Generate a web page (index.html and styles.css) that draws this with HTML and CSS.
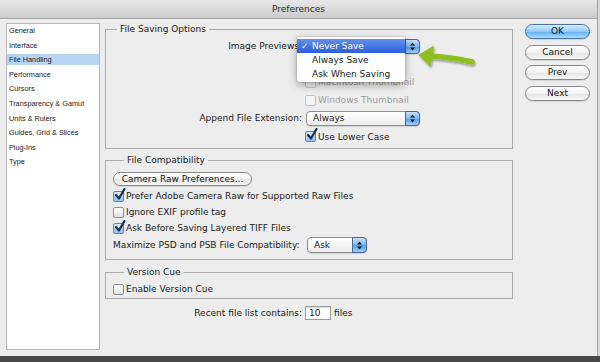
FILE: index.html
```html
<!DOCTYPE html>
<html lang="en">
<head>
    <meta charset="UTF-8">
    <title>Preferences</title>
    <link rel="stylesheet" href="styles.css">
</head>
<body>
    <div class="desk">
        <div class="window">
            <div class="titlebar">Preferences</div>
            <div class="content">
                <ul class="sidebar">
                    <li>General</li>
                    <li>Interface</li>
                    <li class="active">File Handling</li>
                    <li>Performance</li>
                    <li>Cursors</li>
                    <li>Transparency &amp; Gamut</li>
                    <li>Units &amp; Rulers</li>
                    <li>Guides, Grid &amp; Slices</li>
                    <li>Plug-Ins</li>
                    <li>Type</li>
                </ul>

                <div class="main">
                    <fieldset class="group saving">
                        <legend>File Saving Options</legend>
                        <div class="row">
                            <span class="label">Image Previews:</span>
                            <div class="select">Never Save<span class="stepper"><svg width="5" height="9" viewBox="0 0 5 9"><path d="M0 3.5 L2.5 0.5 L5 3.5 Z M0 5.5 L2.5 8.5 L5 5.5 Z" fill="#111"/></svg></span></div>
                        </div>
                        <!-- row hidden under the open menu -->
                        <div class="row indent">
                            <span class="check off"><span class="box"></span></span>
                        </div>
                        <div class="row indent">
                            <span class="check off"><span class="box"></span>Macintosh Thumbnail</span>
                        </div>
                        <div class="row indent">
                            <span class="check off"><span class="box"></span>Windows Thumbnail</span>
                        </div>
                        <div class="row">
                            <span class="label">Append File Extension:</span>
                            <div class="select">Always<span class="stepper"><svg width="5" height="9" viewBox="0 0 5 9"><path d="M0 3.5 L2.5 0.5 L5 3.5 Z M0 5.5 L2.5 8.5 L5 5.5 Z" fill="#111"/></svg></span></div>
                        </div>
                        <div class="row indent last">
                            <span class="check"><span class="box on"><svg width="12" height="13" viewBox="0 0 12 13"><path d="M2 7 L5 10.5 L10.5 1" fill="none" stroke="#1d2f4a" stroke-width="2.2" stroke-linecap="round" stroke-linejoin="round"/></svg></span>Use Lower Case</span>
                        </div>
                    </fieldset>

                    <fieldset class="group compat">
                        <legend>File Compatibility</legend>
                        <div class="btn wide">Camera Raw Preferences...</div>
                        <div class="line">
                            <span class="check"><span class="box on"><svg width="12" height="13" viewBox="0 0 12 13"><path d="M2 7 L5 10.5 L10.5 1" fill="none" stroke="#1d2f4a" stroke-width="2.2" stroke-linecap="round" stroke-linejoin="round"/></svg></span>Prefer Adobe Camera Raw for Supported Raw Files</span>
                        </div>
                        <div class="line">
                            <span class="check"><span class="box"></span>Ignore EXIF profile tag</span>
                        </div>
                        <div class="line">
                            <span class="check"><span class="box on"><svg width="12" height="13" viewBox="0 0 12 13"><path d="M2 7 L5 10.5 L10.5 1" fill="none" stroke="#1d2f4a" stroke-width="2.2" stroke-linecap="round" stroke-linejoin="round"/></svg></span>Ask Before Saving Layered TIFF Files</span>
                        </div>
                        <div class="row">
                            <span class="label left">Maximize PSD and PSB File Compatibility:</span>
                            <div class="select small">Ask<span class="stepper"><svg width="5" height="9" viewBox="0 0 5 9"><path d="M0 3.5 L2.5 0.5 L5 3.5 Z M0 5.5 L2.5 8.5 L5 5.5 Z" fill="#111"/></svg></span></div>
                        </div>
                    </fieldset>

                    <fieldset class="group cue">
                        <legend>Version Cue</legend>
                        <div class="line">
                            <span class="check"><span class="box"></span>Enable Version Cue</span>
                        </div>
                    </fieldset>

                    <div class="recent">
                        <span class="label">Recent file list contains:</span>
                        <span class="input">10</span>
                        <span class="unit">files</span>
                    </div>
                </div>

                <div class="actions">
                    <div class="btn default">OK</div>
                    <div class="btn">Cancel</div>
                    <div class="btn">Prev</div>
                    <div class="btn">Next</div>
                </div>
            </div>

            <!-- open popup of Image Previews -->
            <ul class="menu">
                <li class="selected"><span class="tick">&#10003;</span>Never Save</li>
                <li>Always Save</li>
                <li>Ask When Saving</li>
            </ul>

            <svg class="pointer" width="70" height="34" viewBox="0 0 70 34">
                <defs>
                    <filter id="shade" x="-20%" y="-40%" width="140%" height="180%">
                        <feDropShadow dx="1" dy="2" stdDeviation="1.2" flood-color="#000" flood-opacity="0.35"/>
                    </filter>
                </defs>
                <g filter="url(#shade)" fill="#8dbf24" stroke="#8dbf24">
                    <path d="M14 15 Q36 16 57 21" fill="none" stroke-width="5.5" stroke-linecap="round"/>
                    <path d="M5 14 L18 6 L15 24 Z" stroke-width="2" stroke-linejoin="round"/>
                </g>
            </svg>
        </div>
    </div>
</body>
</html>
```

FILE: styles.css
```css
* {
    box-sizing: border-box;
}
html, body {
    margin: 0;
    padding: 0;
}
body {
    width: 600px;
    height: 362px;
    overflow: hidden;
    background: #484848;
    font-family: "DejaVu Sans", "Liberation Sans", sans-serif;
    font-size: 9px;
    color: #1a1a1a;
}
.desk {
    height: 356px;
    background: #d9d9d9;
}
.window {
    position: relative;
    width: 598px;
    height: 356px;
    background: #ededed;
    border-right: 1px solid #a2a2a2;
    display: flex;
    flex-direction: column;
}
.titlebar {
    flex: none;
    height: 19px;
    line-height: 18px;
    text-align: center;
    font-size: 9px;
    color: #2a2a2a;
    background: linear-gradient(#e8e8e8, #cbcbcb);
    border-bottom: 1px solid #a4a4a4;
}
.content {
    display: flex;
    padding: 4px 0 0 6px;
}

/* Left list */
.sidebar {
    flex: none;
    width: 94px;
    height: 327px;
    margin: 0 5px 0 0;
    padding: 1px 0 0;
    list-style: none;
    background: #fff;
    border: 1px solid #b6b6b6;
    font-family: "Liberation Sans", Arial, sans-serif;
    font-size: 7.3px;
    color: #222;
}
.sidebar li {
    height: 11px;
    line-height: 11px;
    margin-bottom: 3.6px;
    padding-left: 2px;
    white-space: nowrap;
}
.sidebar li.active {
    background: #b9d3f3;
}

/* Main column */
.main {
    flex: none;
    width: 408px;
    display: flex;
    flex-direction: column;
}
.group {
    margin: 0;
    padding: 0;
    min-width: 0;
    border: 1px solid #aaaaaa;
}
.group legend {
    margin-left: 11px;
    padding: 0 3px;
    line-height: 13px;
}
.saving {
    padding: 1px 0 2px;
}
.compat {
    margin-top: 5px;
    padding: 5px 0 5px 7px;
}
.cue {
    margin-top: 6px;
    padding: 2px 0 1px 7px;
}
.row {
    display: flex;
    align-items: center;
    height: 18px;
}
.row.indent {
    padding-left: 199px;
}
.row.last {
    height: 19px;
}
.line {
    display: flex;
    align-items: center;
    height: 16px;
}
.label {
    flex: none;
    width: 196px;
    margin-right: 4px;
    text-align: right;
    white-space: nowrap;
}
.label.left {
    width: 189px;
    margin-right: 5px;
    text-align: left;
}

/* Checkboxes */
.check {
    display: flex;
    align-items: center;
    white-space: nowrap;
}
.box {
    position: relative;
    flex: none;
    width: 11px;
    height: 11px;
    margin-right: 2px;
    border: 1px solid #8c8c8c;
    border-radius: 2px;
    background: linear-gradient(#ffffff, #e2e2e2);
}
.box.on {
    border-color: #6384ad;
    background: linear-gradient(#d8ebfc, #8dc0f1);
}
.box svg {
    position: absolute;
    left: 0;
    top: -4px;
}
.check.off {
    color: #9d9d9d;
}
.check.off .box {
    border-color: #c2c2c2;
    background: #f5f5f5;
}

/* Popup buttons */
.select {
    position: relative;
    width: 114px;
    height: 15px;
    padding-left: 6px;
    line-height: 13px;
    border: 1px solid #8e8e8e;
    border-radius: 4px;
    background: linear-gradient(#ffffff, #ececec);
    box-shadow: 0 1px 1px rgba(0, 0, 0, 0.12);
}
.select.small {
    width: 60px;
    height: 16px;
    line-height: 14px;
}
.stepper {
    position: absolute;
    top: -1px;
    right: -1px;
    bottom: -1px;
    width: 15px;
    display: flex;
    align-items: center;
    justify-content: center;
    border: 1px solid #45679a;
    border-radius: 0 4px 4px 0;
    background: linear-gradient(#c7e2fb, #7ab8f3 50%, #4d9ef0 51%, #9fd0fb);
}

/* Push buttons */
.btn {
    height: 15px;
    line-height: 13px;
    text-align: center;
    color: #151515;
    border: 1px solid #888;
    border-radius: 8px;
    background: linear-gradient(#ffffff, #f3f3f3 50%, #e4e4e4 51%, #f7f7f7);
    box-shadow: 0 1px 1px rgba(0, 0, 0, 0.1);
}
.btn.wide {
    width: 139px;
    height: 14px;
    line-height: 12px;
    margin-bottom: 2px;
}
.btn.default {
    border-color: #4a73a6;
    background: linear-gradient(#d6ecfd, #93cbf8 50%, #5fb0f5 51%, #aadcfd);
}
.actions {
    flex: none;
    width: 65px;
    margin-left: 12px;
    padding-top: 1px;
    display: flex;
    flex-direction: column;
    gap: 5.7px;
}

/* Recent files */
.recent {
    display: flex;
    align-items: center;
    height: 14px;
    margin-top: 7px;
}
.recent .label {
    width: 197px;
    margin-right: 3px;
}
.input {
    width: 26px;
    height: 14px;
    padding-left: 3px;
    line-height: 12px;
    background: #fff;
    border: 1px solid #9a9a9a;
    box-shadow: inset 0 1px 1px rgba(0, 0, 0, 0.15);
}
.unit {
    margin-left: 3px;
}

/* Open popup menu */
.menu {
    position: absolute;
    left: 297px;
    top: 37px;
    width: 108px;
    margin: 0;
    padding: 2px 0 1px;
    list-style: none;
    background: rgba(255, 255, 255, 0.98);
    border-radius: 0 0 4px 4px;
    box-shadow: 0 3px 8px rgba(0, 0, 0, 0.35), 0 0 0 1px rgba(0, 0, 0, 0.08);
}
.menu li {
    position: relative;
    height: 14px;
    line-height: 14px;
    padding-left: 15px;
}
.menu li.selected {
    color: #fff;
    background: linear-gradient(#6490ea, #2b5ede);
}
.tick {
    position: absolute;
    left: 4px;
}
.pointer {
    position: absolute;
    left: 415px;
    top: 41px;
}
```
